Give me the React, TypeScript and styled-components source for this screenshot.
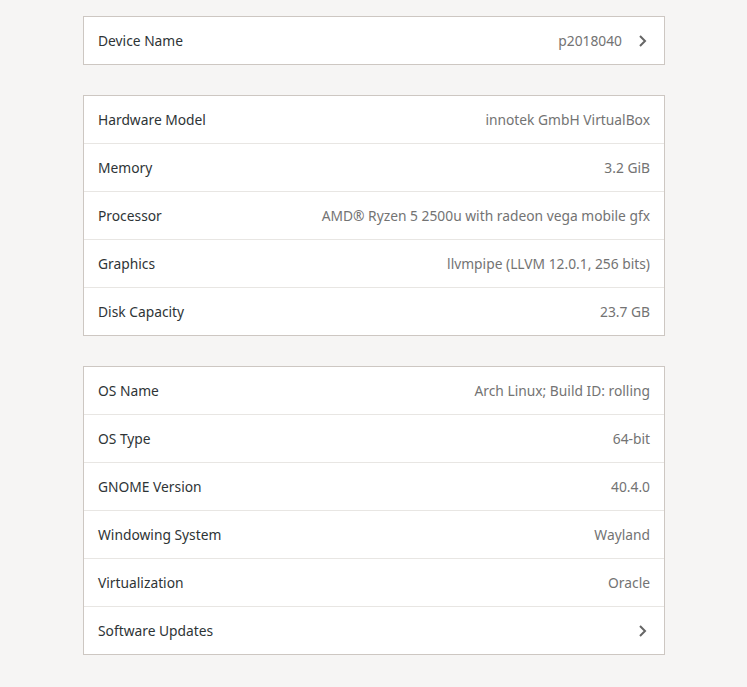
import React from "react";
import styled, { createGlobalStyle } from "styled-components";

const Global = createGlobalStyle`
  html, body { margin: 0; padding: 0; background: #f6f5f4; }
  body { font-family: "Noto Sans", "Open Sans", sans-serif; }
`;

const Page = styled.div`
  width: 747px;
  min-height: 687px;
  box-sizing: border-box;
  padding: 16px 82px 32px 83px;
  display: flex;
  flex-direction: column;
  gap: 30px;
  background: #f6f5f4;
`;

const Card = styled.div`
  background: #ffffff;
  border: 1px solid #cdc7c2;
  display: flex;
  flex-direction: column;
`;

const Row = styled.div`
  height: 47px;
  box-sizing: border-box;
  display: flex;
  align-items: center;
  justify-content: space-between;
  padding: 0 14px;
  & + & { border-top: 1px solid #e8e6e3; height: 48px; }
`;

const Label = styled.span`
  font-size: 13.8px;
  color: #2e3436;
`;

const Value = styled.span`
  font-size: 13.8px;
  color: #737373;
  display: flex;
  align-items: center;
  gap: 16px;
`;

const ChevronSvg = styled.svg`
  margin-right: 2px;
  flex: none;
`;

const Chevron = () => (
  <ChevronSvg width="10" height="12" viewBox="0 0 10 12">
    <path d="M2 1 L7 6 L2 11" fill="none" stroke="#666" strokeWidth="2" />
  </ChevronSvg>
);

const hw: [string, string][] = [
  ["Hardware Model", "innotek GmbH VirtualBox"],
  ["Memory", "3.2 GiB"],
  ["Processor", "AMD® Ryzen 5 2500u with radeon vega mobile gfx"],
  ["Graphics", "llvmpipe (LLVM 12.0.1, 256 bits)"],
  ["Disk Capacity", "23.7 GB"],
];

const os: [string, string][] = [
  ["OS Name", "Arch Linux; Build ID: rolling"],
  ["OS Type", "64-bit"],
  ["GNOME Version", "40.4.0"],
  ["Windowing System", "Wayland"],
  ["Virtualization", "Oracle"],
];

export default function App() {
  return (
    <>
      <Global />
      <Page>
        <Card>
          <Row>
            <Label>Device Name</Label>
            <Value>p2018040<Chevron /></Value>
          </Row>
        </Card>
        <Card>
          {hw.map(([k, v]) => (
            <Row key={k}><Label>{k}</Label><Value>{v}</Value></Row>
          ))}
        </Card>
        <Card>
          {os.map(([k, v]) => (
            <Row key={k}><Label>{k}</Label><Value>{v}</Value></Row>
          ))}
          <Row>
            <Label>Software Updates</Label>
            <Value><Chevron /></Value>
          </Row>
        </Card>
      </Page>
    </>
  );
}
